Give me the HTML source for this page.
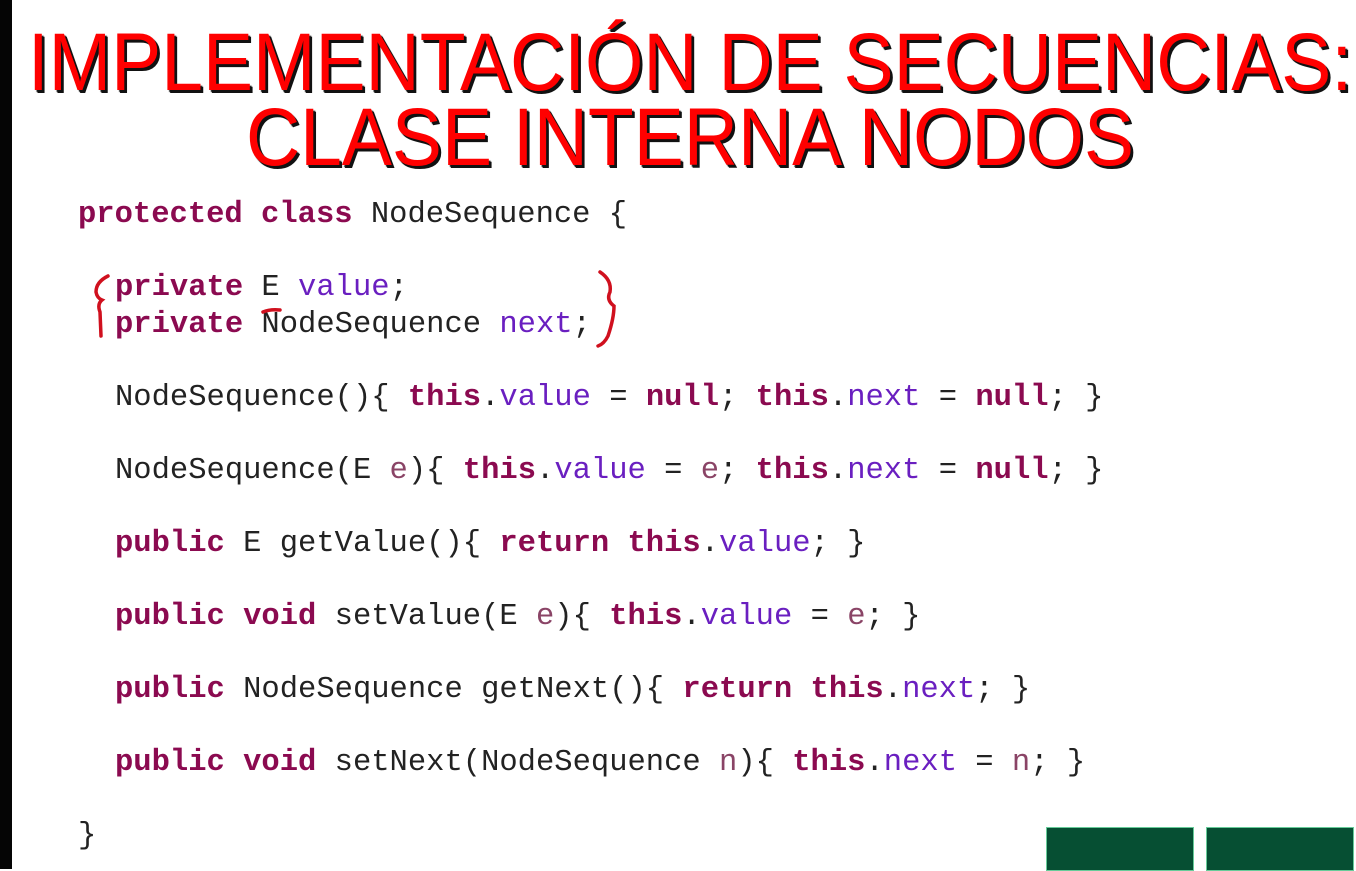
<!DOCTYPE html>
<html><head><meta charset="utf-8"><style>
body{margin:0;width:1356px;height:869px;overflow:hidden;background:#fff;position:relative;font-family:"Liberation Sans",sans-serif}
.strip{position:absolute;left:0;top:0;width:12px;height:869px;background:#050505;z-index:2}
.t{position:absolute;left:-310px;width:2000px;text-align:center;color:#f00;font-size:82px;line-height:1;text-shadow:3px 3px 0 #111,2px 2px 1px #111;white-space:nowrap;transform:scaleX(0.915);transform-origin:1000px 0}
.c{position:absolute;font-family:"Liberation Mono",monospace;font-size:30.5px;line-height:1;color:#222;white-space:pre}
.k{color:#8b0a50;font-weight:bold}
.f{color:#6a1fc0}
.p{color:#8a4466}
.g{position:absolute;top:827px;height:42px;width:146px;background:#064f33;border:1px solid #6c9}
</style></head><body>
<div class="strip"></div>
<div class="t" style="top:22px">IMPLEMENTACIÓN DE SECUENCIAS:</div>
<div class="t" style="top:97px">CLASE INTERNA NODOS</div>
<div class="c" style="left:78px;top:200px"><span class="k">protected class</span> NodeSequence {</div>
<div class="c" style="left:115px;top:273px"><span class="k">private</span> E <span class="f">value</span>;</div>
<div class="c" style="left:115px;top:310px"><span class="k">private</span> NodeSequence <span class="f">next</span>;</div>
<div class="c" style="left:115px;top:383px">NodeSequence(){ <span class="k">this</span>.<span class="f">value</span> = <span class="k">null</span>; <span class="k">this</span>.<span class="f">next</span> = <span class="k">null</span>; }</div>
<div class="c" style="left:115px;top:456px">NodeSequence(E <span class="p">e</span>){ <span class="k">this</span>.<span class="f">value</span> = <span class="p">e</span>; <span class="k">this</span>.<span class="f">next</span> = <span class="k">null</span>; }</div>
<div class="c" style="left:115px;top:529px"><span class="k">public</span> E getValue(){ <span class="k">return this</span>.<span class="f">value</span>; }</div>
<div class="c" style="left:115px;top:602px"><span class="k">public void</span> setValue(E <span class="p">e</span>){ <span class="k">this</span>.<span class="f">value</span> = <span class="p">e</span>; }</div>
<div class="c" style="left:115px;top:675px"><span class="k">public</span> NodeSequence getNext(){ <span class="k">return this</span>.<span class="f">next</span>; }</div>
<div class="c" style="left:115px;top:748px"><span class="k">public void</span> setNext(NodeSequence <span class="p">n</span>){ <span class="k">this</span>.<span class="f">next</span> = <span class="p">n</span>; }</div>
<div class="c" style="left:78px;top:821px">}</div>
<svg style="position:absolute;left:0;top:0" width="1356" height="869" fill="none" stroke="#d0101e" stroke-width="3.5" stroke-linecap="round">
<path d="M108 276 Q96 282 96 292 Q97 298 102 300 Q97 304 100 312 L101 336"/>
<path d="M263 312 Q270 309 280 310"/>
<path d="M600 272 Q612 280 610 292 Q606 300 614 306 Q614 318 608 336 Q604 344 598 346"/>
</svg>
<div class="g" style="left:1046px"></div>
<div class="g" style="left:1206px"></div>
</body></html>
